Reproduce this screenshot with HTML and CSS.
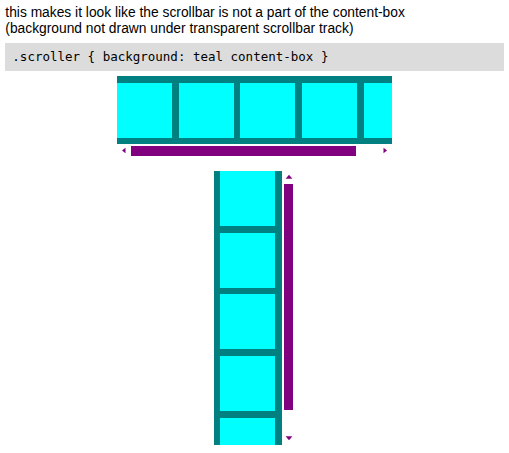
FILE: index.html
```html
<!DOCTYPE html>
<html lang="en">
<head>
<meta charset="utf-8">
<title>scroller background content-box</title>
<link rel="stylesheet" href="styles.css">
</head>
<body>
<p class="note">this makes it look like the scrollbar is not a part of the content-box<br>(background not drawn under transparent scrollbar track)</p>
<pre class="code">.scroller { background: teal content-box }</pre>

<div class="scroller horizontal">
  <div class="viewport">
    <div class="item"></div><div class="item"></div><div class="item"></div><div class="item"></div><div class="item"></div>
  </div>
  <div class="bar">
    <span class="btn"><svg width="6" height="7" viewBox="0 0 6 7"><polygon points="1,3.5 4.5,0.8 4.5,6.2" fill="#800080"/></svg></span>
    <span class="track"><span class="thumb"></span></span>
    <span class="btn"><svg width="6" height="7" viewBox="0 0 6 7"><polygon points="5,3.5 1.5,0.8 1.5,6.2" fill="#800080"/></svg></span>
  </div>
</div>

<div class="scroller vertical">
  <div class="viewport">
    <div class="item"></div><div class="item"></div><div class="item"></div><div class="item"></div><div class="item"></div>
  </div>
  <div class="bar">
    <span class="btn"><svg width="8" height="6" viewBox="0 0 8 6"><polygon points="4,0.8 0.6,4.8 7.4,4.8" fill="#800080"/></svg></span>
    <span class="track"><span class="thumb"></span></span>
    <span class="btn"><svg width="8" height="6" viewBox="0 0 8 6"><polygon points="4,5.2 0.6,1.2 7.4,1.2" fill="#800080"/></svg></span>
  </div>
</div>
</body>
</html>
```

FILE: styles.css
```css
body {
  margin: 0;
  padding: 5px 5.33px 0;
  font-family: "Liberation Sans", Arial, sans-serif;
  color: #000;
  background: #fff;
}

.note {
  margin: 0;
  font-size: 13.8px;
  line-height: 15.5px;
}

.code {
  margin: 6.7px 0 0;
  height: 28px;
  padding: 0 7px;
  background: #dcdcdc;
  font-family: "DejaVu Sans Mono", monospace;
  font-size: 12.5px;
  line-height: 28px;
}

/* scroll container: teal content area, cyan tiles, purple scrollbar on a clear track */
.scroller {
  display: flex;
  margin-left: auto;
  margin-right: auto;
}

.viewport {
  display: flex;
  gap: 6.67px;
  overflow: hidden;
  background: #008080;
}

.item {
  flex: 0 0 55px;
  width: 55px;
  height: 55px;
  background: #00ffff;
}

.bar {
  display: flex;
}

.btn {
  display: flex;
  align-items: center;
  justify-content: center;
  flex: 0 0 auto;
}

.btn svg {
  display: block;
}

.track {
  display: flex;
  flex: 1;
}

.thumb {
  background: #800080;
}

/* horizontal variant */
.horizontal {
  flex-direction: column;
  width: 274.67px;
  margin-top: 5.3px;
}

.horizontal .viewport {
  flex-direction: row;
  height: 55px;
  padding: 6.67px 0;
}

.horizontal .bar {
  flex-direction: row;
  height: 13px;
}

.horizontal .btn {
  width: 13.33px;
}

.horizontal .track {
  align-items: center;
}

.horizontal .thumb {
  width: 90.9%;
  height: 9.67px;
}

/* vertical variant */
.vertical {
  flex-direction: row;
  width: 81.33px;
  margin-top: 13.67px;
}

.vertical .viewport {
  flex-direction: column;
  width: 55px;
  height: 274px;
  padding: 0 6.67px;
}

.vertical .bar {
  flex-direction: column;
  width: 13px;
}

.vertical .btn {
  height: 13px;
}

.vertical .track {
  flex-direction: column;
  align-items: center;
}

.vertical .thumb {
  width: 9.67px;
  height: 91.1%;
}
```
